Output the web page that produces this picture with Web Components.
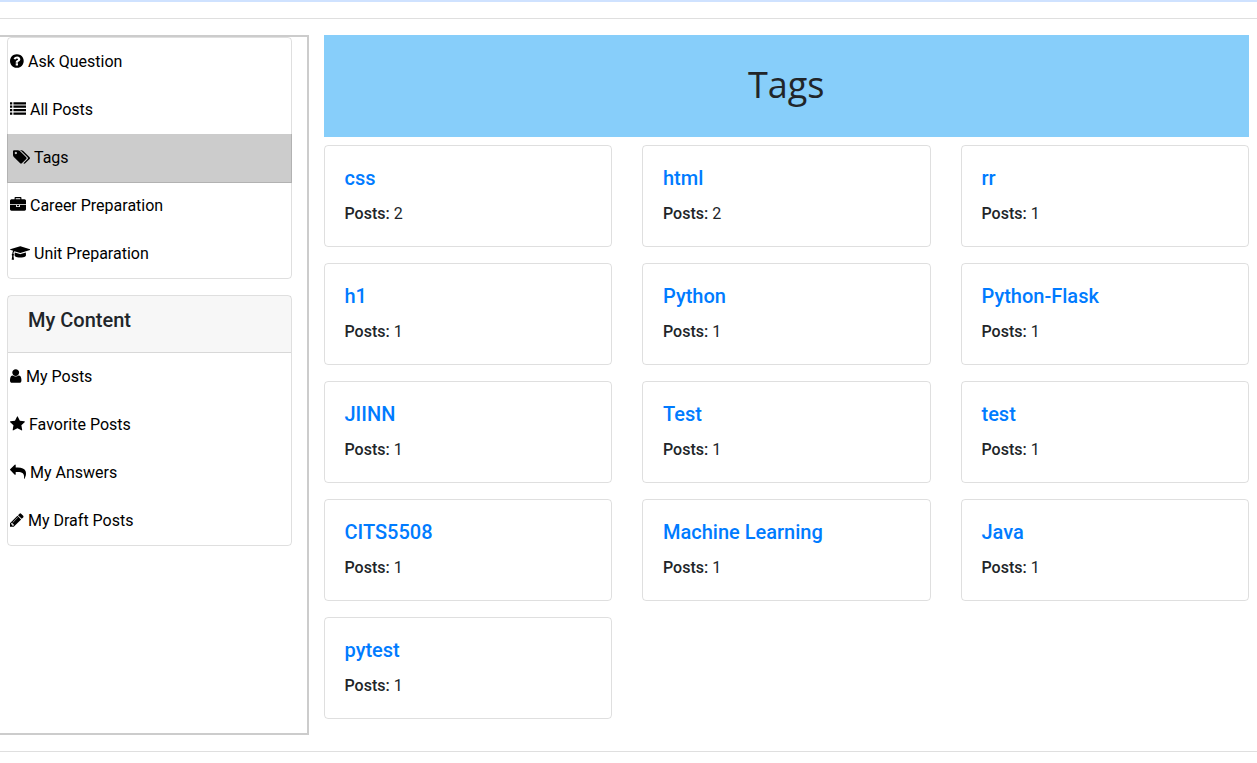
<!DOCTYPE html>
<html lang="en">
<head>
<meta charset="utf-8">
<meta name="viewport" content="width=device-width, initial-scale=1">
<title>Tags</title>
<style>
  body {
    margin: 0;
    background: #fff;
    color: #212529;
    font: 400 16px/24px Roboto, sans-serif;
  }
</style>
</head>
<body>
<forum-page>
  <side-card slot="side" label="Main">
    <nav-item icon="question">Ask Question</nav-item>
    <nav-item icon="list">All Posts</nav-item>
    <nav-item icon="tags" active>Tags</nav-item>
    <nav-item icon="briefcase">Career Preparation</nav-item>
    <nav-item icon="cap">Unit Preparation</nav-item>
  </side-card>
  <side-card slot="side" label="My Content" heading="My Content">
    <nav-item icon="user">My Posts</nav-item>
    <nav-item icon="star">Favorite Posts</nav-item>
    <nav-item icon="reply">My Answers</nav-item>
    <nav-item icon="pencil">My Draft Posts</nav-item>
  </side-card>
  <page-banner>Tags</page-banner>
  <tag-grid>
    <tag-card posts="2">css</tag-card>
    <tag-card posts="2">html</tag-card>
    <tag-card posts="1">rr</tag-card>
    <tag-card posts="1">h1</tag-card>
    <tag-card posts="1">Python</tag-card>
    <tag-card posts="1">Python-Flask</tag-card>
    <tag-card posts="1">JIINN</tag-card>
    <tag-card posts="1">Test</tag-card>
    <tag-card posts="1">test</tag-card>
    <tag-card posts="1">CITS5508</tag-card>
    <tag-card posts="1">Machine Learning</tag-card>
    <tag-card posts="1">Java</tag-card>
    <tag-card posts="1">pytest</tag-card>
  </tag-grid>
</forum-page>

<script>
// Each icon: left edge in the 1792-unit-high grid, drawn width in pixels, path.
const ICONS = {
  question: [128, 14, 'M1024 1376v-192q0-14-9-23t-23-9h-192q-14 0-23 9t-9 23v192q0 14 9 23t23 9h192q14 0 23-9t9-23zm256-672q0-88-55.5-163t-138.5-116-170-41q-243 0-371 213-15 24 8 42l132 100q7 6 19 6 16 0 25-12 53-68 86-92 34-24 86-24 48 0 85.5 26t37.5 59q0 38-20 61t-68 45q-63 28-115.5 86.5t-52.5 125.5v36q0 14 9 23t23 9h192q14 0 23-9t9-23q0-19 21.5-49.5t54.5-49.5q32-18 49-28.5t46-35 44.5-48 28-60.5 12.5-81zm384 192q0 209-103 385.5t-279.5 279.5-385.5 103-385.5-103-279.5-279.5-103-385.5 103-385.5 279.5-279.5 385.5-103 385.5 103 279.5 279.5 103 385.5z'],
  list: [0, 16, 'M0 1280h256v256H0zM0 896h256v256H0zM0 512h256v256H0zM0 128h256v256H0zM384 1280h1408v256H384zM384 896h1408v256H384zM384 512h1408v256H384zM384 128h1408v256H384z'],
  tags: [0, 17, 'M448 448q0-53-37.5-90.5t-90.5-37.5-90.5 37.5-37.5 90.5 37.5 90.5 90.5 37.5 90.5-37.5 37.5-90.5zm1067 576q0 53-37 90l-491 492q-39 37-91 37-53 0-90-37l-715-716q-38-37-64.5-101t-26.5-117v-416q0-52 38-90t90-38h416q53 0 117 26.5t102 64.5l715 714q37 39 37 91zm384 0q0 53-37 90l-491 492q-39 37-91 37-36 0-59-14t-53-45l470-470q37-37 37-90 0-52-37-91l-715-714q-38-38-102-64.5t-117-26.5h224q53 0 117 26.5t102 64.5l715 714q37 39 37 91z'],
  briefcase: [0, 16, 'M640 256h512v-128h-512v128zm1152 640v480q0 66-47 113t-113 47h-1472q-66 0-113-47t-47-113v-480h672v160q0 26 19 45t45 19h320q26 0 45-19t19-45v-160h672zm-768 0v128h-256v-128h256zm768-480v384h-1792v-384q0-66 47-113t113-47h352v-160q0-40 28-68t68-28h576q40 0 68 28t28 68v160h352q66 0 113 47t47 113z'],
  cap: [0, 20, 'M1774 836l18 316q4 69-82 128t-235 93.5-323 34.5-323-34.5-235-93.5-82-128l18-316 574 181q22 7 48 7t48-7zm530-324q0 23-22 31l-1120 352q-4 1-10 1t-10-1l-652-206q-43 34-71 111.5t-34 178.5q63 36 63 109 0 69-58 107l58 433q2 14-8 25-9 11-24 11h-192q-15 0-24-11-10-11-8-25l58-433q-58-38-58-107 0-73 65-111 11-207 98-330l-333-104q-22-8-22-31t22-31l1120-352q4-1 10-1t10 1l1120 352q22 8 22 31z'],
  user: [256, 12, 'M1536 1399q0 109-62.5 187t-150.5 78h-854q-88 0-150.5-78t-62.5-187q0-85 8.5-160.5t31.5-152 58.5-131 94-89 134.5-34.5q131 128 313 128t313-128q76 0 134.5 34.5t94 89 58.5 131 31.5 152 8.5 160.5zm-256-887q0 159-112.5 271.5t-271.5 112.5-271.5-112.5-112.5-271.5 112.5-271.5 271.5-112.5 271.5 112.5 112.5 271.5z'],
  star: [64, 15, 'M1728 647q0 22-26 48l-363 354 86 500q1 7 1 20 0 21-10.5 35.5t-30.5 14.5q-19 0-40-12l-449-236-449 236q-22 12-40 12-21 0-31.5-14.5t-10.5-35.5q0-6 2-20l86-500-364-354q-25-27-25-48 0-37 56-46l502-73 225-455q19-41 49-41t49 41l225 455 502 73q56 9 56 46z'],
  reply: [0, 16, 'M1792 1120q0 166-127 451-3 7-10.5 24t-13.5 30-13 22q-12 17-28 17-15 0-23.5-10t-8.5-25q0-9 2.5-26.5t2.5-23.5q5-68 5-123 0-101-17.5-181t-48.5-138.5-80-101-105.5-69.5-133-42.5-154-21.5-175.5-6h-224v256q0 26-19 45t-45 19-45-19l-512-512q-19-19-19-45t19-45l512-512q19-19 45-19t45 19 19 45v256h224q713 0 875 403 53 134 53 333z'],
  pencil: [128, 14, 'M491 1536l91-91-235-235-91 91v107h128v128h107zm523-928q0-22-22-22-10 0-17 7l-542 542q-7 7-7 17 0 22 22 22 10 0 17-7l542-542q7-7 7-17zm-54-192l416 416-832 832h-416v-416zm683 96q0 53-37 90l-166 166-416-416 166-165q36-38 90-38 53 0 91 38l235 234q37 39 37 91z'],
};

class ForumPage extends HTMLElement {
  constructor() {
    super();
    this.attachShadow({ mode: 'open' }).innerHTML = `
      <style>
        :host { display: block; border-top: 2px solid #cfe2ff; }
        hr { margin: 16px 0; border: 0; border-top: 1px solid rgba(0, 0, 0, .125); }
        .columns {
          display: grid;
          grid-template-columns: minmax(0, 1fr) minmax(0, 3fr);
          column-gap: 15px;
          padding-right: 8px;
        }
        aside {
          padding: 0 15px 0 7px;
          border: 2px solid #ccc;
          border-left: 0;
        }
      </style>
      <hr>
      <div class="columns">
        <aside><slot name="side"></slot></aside>
        <main><slot></slot></main>
      </div>
      <hr>`;
  }
}

class SideCard extends HTMLElement {
  connectedCallback() {
    const heading = this.getAttribute('heading');
    this.attachShadow({ mode: 'open' }).innerHTML = `
      <style>
        :host {
          display: block;
          margin-bottom: 16px;
          border: 1px solid rgba(0, 0, 0, .125);
          border-radius: 4px;
        }
        header {
          padding: 12px 20px 20px;
          background: rgba(0, 0, 0, .03);
          border-bottom: 1px solid rgba(0, 0, 0, .125);
        }
        h2 { margin: 0; font-size: 20px; font-weight: 500; line-height: 24px; }
      </style>
      ${heading ? `<header><h2>${heading}</h2></header>` : ''}
      <nav aria-label="${this.getAttribute('label')}"><slot></slot></nav>`;
  }
}

class NavItem extends HTMLElement {
  connectedCallback() {
    const [left, width, path] = ICONS[this.getAttribute('icon')];
    this.attachShadow({ mode: 'open' }).innerHTML = `
      <style>
        :host { display: block; }
        a {
          display: flex;
          align-items: center;
          gap: 4px;
          height: 48px;
          padding-left: 2px;
          color: #000;
          text-decoration: none;
        }
        svg { flex: none; margin-bottom: 2px; fill: currentColor; }
        :host([active]) a {
          margin: 0 -1px -1px;
          padding-left: 5px;
          background: #ccc;
          border: solid rgba(0, 0, 0, .125);
          border-width: 0 1px 1px;
        }
      </style>
      <a href="#"${this.hasAttribute('active') ? ' aria-current="page"' : ''}>
        <svg width="${width}" height="16" viewBox="${left} 0 ${width * 112} 1792" aria-hidden="true"><path d="${path}"/></svg>
        <span><slot></slot></span>
      </a>`;
  }
}

class PageBanner extends HTMLElement {
  constructor() {
    super();
    this.attachShadow({ mode: 'open' }).innerHTML = `
      <style>
        :host {
          display: block;
          margin-bottom: 8px;
          padding: 23px 24px 25px;
          background: #87cefa;
          text-align: center;
        }
        h1 { margin: 0; font: 500 36px/54px "Open Sans", sans-serif; }
      </style>
      <h1><slot></slot></h1>`;
  }
}

class TagGrid extends HTMLElement {
  constructor() {
    super();
    this.attachShadow({ mode: 'open' }).innerHTML = `
      <style>
        :host {
          display: grid;
          grid-template-columns: repeat(3, minmax(0, 1fr));
          gap: 16px 30px;
          padding-bottom: 16px;
        }
      </style>
      <slot></slot>`;
  }
}

class TagCard extends HTMLElement {
  connectedCallback() {
    this.attachShadow({ mode: 'open' }).innerHTML = `
      <style>
        :host {
          display: block;
          padding: 20px;
          border: 1px solid rgba(0, 0, 0, .125);
          border-radius: 4px;
        }
        h2 { margin: 0 0 12px; font-size: 20px; font-weight: 500; line-height: 24px; }
        a { color: #007bff; text-decoration: none; }
        p { margin: 0; }
        b { font-weight: 500; }
      </style>
      <h2><a href="#"><slot></slot></a></h2>
      <p><b>Posts:</b> ${this.getAttribute('posts')}</p>`;
  }
}

customElements.define('forum-page', ForumPage);
customElements.define('side-card', SideCard);
customElements.define('nav-item', NavItem);
customElements.define('page-banner', PageBanner);
customElements.define('tag-grid', TagGrid);
customElements.define('tag-card', TagCard);
</script>
</body>
</html>
